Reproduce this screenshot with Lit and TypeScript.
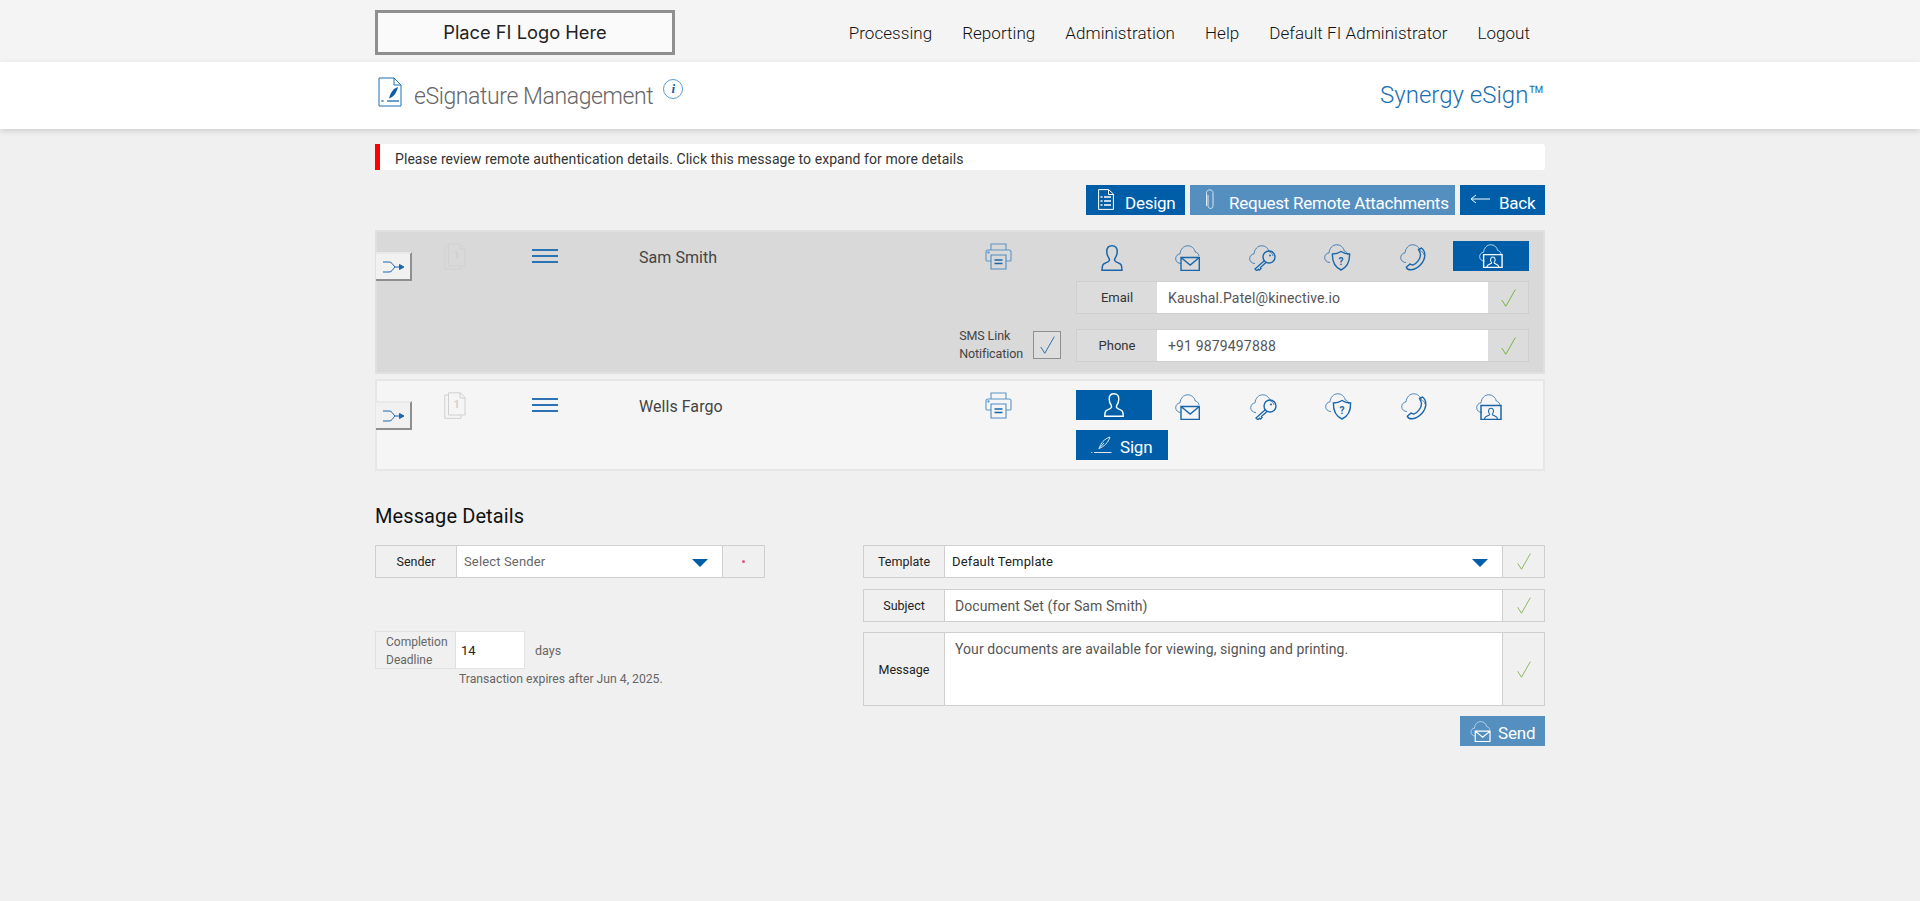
import { LitElement, html, css, svg } from "lit";
import { customElement } from "lit/decorators.js";

const B = "#1a66ab";
const cloud = (c: string) => svg`<path d="M6 18.500C3 18.500.7 16.500.7 13.700.7 11 2.500 9.200 5 8.900 5.500 4.200 8.500.8 12.700.8c3.800 0 6.800 2.500 7.500 6.200 1.800.3 3.300 1.600 3.800 4" fill="none" stroke="${c}" stroke-width="1" opacity=".75"/>`;
const person = (c: string) => svg`<svg width="22" height="26" viewBox="0 0 22 26" fill="none" stroke="${c}" stroke-width="1.500"><path d="M11 .8C7.500.8 5.800 3 5.800 6.500c0 2.800.9 5 2.200 6.800.6 1 .4 2.400-.6 3.200-1 .9-4.200 1.700-5.300 3C1.100 20.900 1 23 1 25.200h20c0-2.200-.1-4.300-1.100-5.700-1.100-1.300-4.300-2.100-5.300-3-1-.8-1.200-2.200-.6-3.200 1.300-1.800 2.200-4 2.200-6.800C16.200 3 14.500.8 11 .8z"/></svg>`;
const mail = (c: string) => svg`<svg width="25" height="26" viewBox="0 0 25 26" fill="none">${cloud(c)}<path d="M6 12.500h18.300v13H6zM6 12.500l9.200 7.500 9.100-7.500" stroke="${c}" stroke-width="1.400"/></svg>`;
const key = (c: string) => svg`<svg width="27" height="26" viewBox="0 0 27 26" fill="none">${cloud(c)}<circle cx="20" cy="12" r="6" stroke="${c}" stroke-width="1.400"/><circle cx="21" cy="10.500" r="1" fill="${c}"/><path d="M15.500 15.500L6 24l1.800 1.700 1.700-1.500.9.900 1.700-1.600-.7-.9 5.800-5.400" stroke="${c}" stroke-width="1.300"/></svg>`;
const shield = (c: string) => svg`<svg width="27" height="27" viewBox="0 0 27 27" fill="none">${cloud(c)}<path d="M17 7.500c2.500 1.700 5.200 2.500 8.600 2.500.2 7.500-1.600 12.800-8.600 16-7-3.200-8.800-8.500-8.600-16 3.400 0 6.100-.8 8.600-2.500z" stroke="${c}" stroke-width="1.400"/><text x="17" y="21" font-size="10" font-weight="700" text-anchor="middle" fill="${c}" stroke="none" font-family="Roboto">?</text></svg>`;
const phone = (c: string) => svg`<svg width="26" height="27" viewBox="0 0 26 27" fill="none">${cloud(c)}<path d="M18.500 5.500l3-1.500c2 1.500 3.300 4 3.300 7 0 6.500-6.300 14-13.500 14.800-2.300.1-4.500-.8-5-2.600l3.800-3.200c1 .8 2.200 1.100 3.200.8 3.200-1 7.200-6 7.200-10 0-1.700-1-3-2-5.300z" stroke="${c}" stroke-width="1.400"/></svg>`;
const camera = (c: string) => svg`<svg width="26" height="26" viewBox="0 0 26 26" fill="none">${cloud(c)}<path d="M5 11.500h20v14H5z" stroke="${c}" stroke-width="1.500"/><path d="M8.500 25c0-3 3.800-3 5-4.200.4-.7 0-1.100-.5-1.800-.8-1.300-.8-4.800 2-4.800s2.800 3.500 2 4.800c-.5.700-.9 1.100-.5 1.800 1.200 1.200 5 1.200 5 4.200" stroke="${c}" stroke-width="1.100"/></svg>`;
const printer = svg`<svg width="27" height="27" viewBox="0 0 27 27" fill="none" stroke="#5b95c6" stroke-width="1.100"><path d="M6 7V1h15v6M6 18H2a1 1 0 0 1-1-1V9a2 2 0 0 1 2-2h21a2 2 0 0 1 2 2v8a1 1 0 0 1-1 1h-4"/><path d="M6 12h15v14H6z" fill="none" stroke="#4c8cc2"/><path d="M9.500 17h8M9.500 20.500h8" stroke="#1a66ab" stroke-width="1.300"/><circle cx="3.500" cy="9.500" r=".6" fill="#1a66ab"/></svg>`;
const check = (c: string, w = 15, h = 18) => svg`<svg width="${w}" height="${h}" viewBox="0 0 15 18" fill="none" stroke="${c}" stroke-width="1"><path d="M.8 11l4 6.300L14.300.6"/></svg>`;
const shuffle = svg`<svg width="22" height="12" viewBox="0 0 22 12" fill="none" stroke="#1a66ab" stroke-width="1"><path d="M0 1h6c3 0 3 2 6 5-3 3-3 5-6 5H0M12 6h6"/><path d="M16.500 3.500L21 6l-4.500 2.500z" fill="#1a66ab"/></svg>`;
const pages = svg`<svg width="22" height="27" viewBox="0 0 22 27" fill="none" stroke="#d0d0d0" stroke-width="1"><path d="M4 3h-3.200v23.300H17V23M4.500.8h12L21 5.500v17.500H4.500z"/><path d="M16 1v5h5"/><text x="12.500" y="16" font-size="10" font-weight="700" text-anchor="middle" fill="#cfcfcf" stroke="none" font-family="Roboto">1</text></svg>`;
const docSign = svg`<svg width="24" height="30" viewBox="0 0 24 30" fill="none"><path d="M1 1h15l7 7v21H1z" stroke="#1a6fb5" stroke-width="1"/><path d="M16 1v7h7" stroke="#1a6fb5" stroke-width="1"/><path d="M20 10c-4.500 1.500-7.500 5-9 11.500 4.500-1.500 7.500-5.500 9-11.500z" fill="#0d5ea6"/><path d="M9 24h12" stroke="#0d5ea6" stroke-width="1.200"/><path d="M3.500 23l2 2m0-2l-2 2" stroke="#0d5ea6" stroke-width=".8"/></svg>`;
const design = svg`<svg width="16" height="21" viewBox="0 0 16 21" fill="none" stroke="#fff" stroke-width="1"><path d="M.6.6h10L15.400 5v15.400H.6z"/><path d="M10.500 1v4.500h5"/><path d="M2.500 8h2M6 8h7M2.500 12h2M6 12h7M2.500 16h2M6 16h7" stroke-width="1.300"/></svg>`;
const clip = svg`<svg width="10" height="21" viewBox="0 0 10 21" fill="none" stroke="#dbe7f2" stroke-width="1"><path d="M3 6v10.500c0 4 5 4 5 0V3.500C8 0 1.500 0 1.500 3.500V17"/></svg>`;
const back = svg`<svg width="20" height="10" viewBox="0 0 20 10" fill="none" stroke="#fff" stroke-width="1"><path d="M20 5H1M6 1L1 5l5 4"/></svg>`;
const pen = svg`<svg width="21" height="18" viewBox="0 0 21 18" fill="none" stroke="#dbe7f2" stroke-width="1"><path d="M19 1C13 3 10 7 8 12.500c5-2 9-5.500 11-11.500zM8 12.500l5-5.500"/><path d="M3 16.500h17.500M.3 16.500h1"/></svg>`;
const sendIcon = svg`<svg width="21" height="21" viewBox="0 0 25 26" fill="none">${cloud("#f2f6fa")}<path d="M6 12.500h18.300v13H6zM6 12.500l9.200 7.500 9.100-7.500" stroke="#fff" stroke-width="1.500"/></svg>`;

@customElement("app-root")
export class AppRoot extends LitElement {
  static styles = css`
    :host { display: block; min-height: 901px; background: #f0f0f0; font-family: Roboto, "Liberation Sans", sans-serif; color: #444; }
    * { box-sizing: border-box; }
    .wrap { width: 1170px; margin: 0 auto; }
    .top { background: #f4f4f4; height: 62px; }
    .top .wrap { display: flex; justify-content: space-between; padding-top: 10px; }
    .logo { width: 300px; height: 45px; border: 3px solid #8f8f8f; background: #fafafa; display: flex; align-items: center; justify-content: center; font: 400 18.300px Inter, sans-serif; color: #222; padding-bottom: 2px; }
    nav { display: flex; gap: 30px; padding: 13px 15px 0 0; font-size: 17px; font-weight: 300; color: #111; letter-spacing: .05px; }
    .band { background: #fff; height: 67px; box-shadow: 0 2px 6px rgba(0,0,0,.15); position: relative; }
    .band .wrap { display: flex; justify-content: space-between; height: 100%; }
    .title { display: flex; padding: 15px 0 0 3px; color: #666; font-size: 23px; font-weight: 300; letter-spacing: -.4px; }
    .title span.t { margin-left: 12px; padding-top: 6px; }
    .info { width: 20px; height: 20px; border: 1px solid #5b9bd0; border-radius: 50%; margin: 2px 0 0 10px; color: #0d5ea6; font: italic 700 13px/18px "Liberation Serif", serif; text-align: center; letter-spacing: 0; }
    .brand { color: #1a6fb0; font-size: 24px; font-weight: 300; padding-top: 19px; }
    .brand sup { font-size: 27px; line-height: 0; vertical-align: -2px; }
    .alert { margin-top: 15px; height: 26px; background: #fff; border-left: 5px solid #f00; border-radius: 0 3px 3px 0; padding-left: 15px; font-size: 14px; line-height: 30px; color: #333; letter-spacing: .07px; }
    .actions { display: flex; justify-content: flex-end; gap: 5px; margin-top: 15px; }
    .btn { height: 30px; background: #005ea8; color: #fff; display: flex; align-items: center; font-size: 17px; letter-spacing: -.25px; }
    .btn span { padding-top: 5px; }
    .btn svg { margin-top: -2px; }
    .btn.dim { background: #548fc0; }
    .design { width: 99px; padding-left: 12px; gap: 11px; }
    .req { width: 265px; padding-left: 15px; gap: 14px; }
    .bk { width: 85px; padding-left: 10px; gap: 9px; }
    .row { display: grid; grid-template-columns: 67px 88px 107px 346px 91px 1fr; margin-top: 5px; border: 2px solid #e6e6e6; background: #f5f5f5; padding-bottom: 8px; }
    .row.sel { margin-top: 15px; background: #d9d9d9; border-color: #e0e0e0; height: 144px; }
    .row.two { height: 92px; }
    .row > * { grid-row: 1; }
    .shuf { width: 36px; height: 29px; margin-top: 20px; background: #f1f1f1; border-right: 2px solid #8f8f8f; border-bottom: 2px solid #8f8f8f; border-top: 2px solid #e9e9e9; display: flex; align-items: center; justify-content: center; padding-left: 2px; margin-left: -1px; }
    .pg { padding-top: 11px; }
    .ham { padding-top: 17px; }
    .ham i { display: block; width: 26px; height: 2px; background: #2b73b3; margin-bottom: 4px; }
    .name { padding: 16px 0 0 0; font-size: 16px; color: #444; letter-spacing: .05px; grid-column: 4; }
    .prn { padding-top: 11px; grid-column: 5; }
    .right { padding: 9px 14px 0 0; display: flex; flex-direction: column; grid-column: 6; }
    .icons { display: grid; grid-template-columns: repeat(6, 1fr); height: 30px; width: 453px; }
    .tile { display: flex; align-items: center; justify-content: center; height: 30px; padding-top: 3px; padding-right: 4px; }
    .tile.on { background: #005ea8; width: 76px; padding: 0; }
    .tile.on svg { height: 24px; width: 24px; }
    .field { display: flex; width: 453px; height: 33px; margin-top: 10px; border: 1px solid #cfcfcf; background: #dcdcdc; }
    .field + .field { margin-top: 15px; }
    .lab { width: 80px; display: flex; align-items: center; justify-content: center; font-size: 13px; color: #333; }
    .val { flex: 1; background: #fff; font-size: 14px; color: #555; padding: 0 11px; display: flex; align-items: center; letter-spacing: .15px; }
    .ck { width: 40px; display: flex; align-items: center; justify-content: center; }
    .smsline { grid-column: 4 / 6; justify-self: end; align-self: start; display: flex; margin: 95px 15px 0 0; gap: 10px; align-items: center; font-size: 12.500px; line-height: 18px; color: #444; letter-spacing: -.1px; }
    .box { width: 28px; height: 28px; border: 1px solid #8f8f8f; display: flex; align-items: center; justify-content: center; background: #dedede; }
    .sign { width: 92px; height: 30px; margin-top: 10px; background: #005ea8; color: #fff; display: flex; align-items: center; padding-left: 15px; gap: 8px; font-size: 17px; letter-spacing: -.2px; }
    .sign span, .send span { padding-top: 4px; }
    h2 { margin: 30px 0 0; font-size: 20px; font-weight: 400; color: #111; line-height: 30px; letter-spacing: .1px; }
    .details { display: grid; grid-template-columns: 390px 682px; justify-content: space-between; margin-top: 14px; }
    .f2 { display: flex; height: 33px; border: 1px solid #cfcfcf; background: #f0f0f0; }
    .f2 .lab { color: #222; font-size: 12.500px; }
    .f2 .v { flex: 1; background: #fff; border-left: 1px solid #cfcfcf; border-right: 1px solid #cfcfcf; display: flex; align-items: center; font-size: 13px; color: #666; padding-left: 7px; position: relative; letter-spacing: .15px; }
    .arrow { position: absolute; right: 14px; top: 13px; width: 0; height: 0; border-left: 8px solid transparent; border-right: 8px solid transparent; border-top: 8px solid #005ea8; }
    .dot { width: 41px; display: flex; justify-content: center; padding-top: 14px; }
    .dot i { width: 3px; height: 3px; background: #e05a80; border-radius: 50%; }
    .deadline { display: flex; margin-top: 53px; height: 38px; align-items: center; }
    .dl { width: 81px; height: 38px; border: 1px solid #e0e0e0; background: #f0f0f0; font-size: 12px; line-height: 18px; padding: 1px 0 0 10px; color: #666; }
    .num { width: 69px; height: 38px; background: #fff; border: 1px solid #e4e4e4; border-left: 0; font-size: 13px; color: #222; padding-left: 5px; display: flex; align-items: center; }
    .days { margin-left: 10px; font-size: 12.500px; color: #666; }
    .exp { margin: 2px 0 0 84px; font-size: 12.200px; color: #666; line-height: 16px; }
    .r2 { display: flex; flex-direction: column; gap: 11px; }
    .r2 .v.in { padding-left: 10px; font-size: 14px; letter-spacing: .085px; color: #555; }
    .r2 .ck { width: 41px; }
    .msg { height: 74px; margin-top: -1px; }
    .msg .v.in { align-items: flex-start; padding-top: 8px; }
    .send-row { display: flex; justify-content: flex-end; margin-top: -1px; }
    .send { width: 85px; height: 30px; background: #548fc0; color: #fff; display: flex; align-items: center; padding-left: 10px; gap: 7px; font-size: 17px; letter-spacing: -.2px; }
  `;

  private icons(active: number) {
    const fns = [person, mail, key, shield, phone, camera];
    return html`<div class="icons">${fns.map((f, i) => html`<div class="tile ${i === active ? "on" : ""}">${f(i === active ? "#fff" : B)}</div>`)}</div>`;
  }

  render() {
    const g = "#86b35a";
    return html`
      <div class="top"><div class="wrap">
        <div class="logo">Place FI Logo Here</div>
        <nav><span>Processing</span><span>Reporting</span><span>Administration</span><span>Help</span><span>Default FI Administrator</span><span>Logout</span></nav>
      </div></div>
      <div class="band"><div class="wrap">
        <div class="title">${docSign}<span class="t">eSignature Management</span><div class="info">i</div></div>
        <div class="brand">Synergy eSign<sup>™</sup></div>
      </div></div>
      <div class="wrap">
        <div class="alert">Please review remote authentication details. Click this message to expand for more details</div>
        <div class="actions">
          <div class="btn design">${design}<span>Design</span></div>
          <div class="btn dim req">${clip}<span>Request Remote Attachments</span></div>
          <div class="btn bk">${back}<span>Back</span></div>
        </div>
        <div class="row sel">
          <div class="shuf">${shuffle}</div>
          <div class="pg" style="opacity:.8">${pages}</div>
          <div class="ham"><i></i><i></i><i></i></div>
          <div class="name">Sam Smith</div>
          <div class="prn">${printer}</div>
          <div class="right">
            ${this.icons(5)}
            <div class="field"><div class="lab">Email</div><div class="val">Kaushal.Patel@kinective.io</div><div class="ck">${check("#7db343")}</div></div>
            <div class="field"><div class="lab">Phone</div><div class="val">+91 9879497888</div><div class="ck">${check("#7db343")}</div></div>
          </div>
          <div class="smsline"><span>SMS Link<br />Notification</span><div class="box">${check("#2b73b3")}</div></div>
        </div>
        <div class="row two">
          <div class="shuf">${shuffle}</div>
          <div class="pg">${pages}</div>
          <div class="ham"><i></i><i></i><i></i></div>
          <div class="name">Wells Fargo</div>
          <div class="prn">${printer}</div>
          <div class="right">
            ${this.icons(0)}
            <div class="sign">${pen}<span>Sign</span></div>
          </div>
        </div>
        <h2>Message Details</h2>
        <div class="details">
          <div class="left">
            <div class="f2"><div class="lab">Sender</div><div class="v">Select Sender<i class="arrow"></i></div><div class="dot"><i></i></div></div>
            <div class="deadline"><div class="dl">Completion<br />Deadline</div><div class="num">14</div><div class="days">days</div></div>
            <div class="exp">Transaction expires after Jun 4, 2025.</div>
          </div>
          <div class="r2">
            <div class="f2"><div class="lab">Template</div><div class="v" style="color:#222">Default Template<i class="arrow"></i></div><div class="ck">${check(g, 14, 17)}</div></div>
            <div class="f2"><div class="lab">Subject</div><div class="v in">Document Set (for Sam Smith)</div><div class="ck">${check(g, 14, 17)}</div></div>
            <div class="f2 msg"><div class="lab">Message</div><div class="v in">Your documents are available for viewing, signing and printing.</div><div class="ck">${check(g, 14, 17)}</div></div>
            <div class="send-row"><div class="send">${sendIcon}<span>Send</span></div></div>
          </div>
        </div>
      </div>
    `;
  }
}
